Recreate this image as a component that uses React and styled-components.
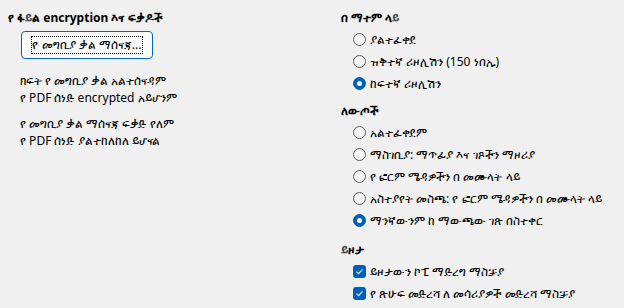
import React from "react";
import styled, { createGlobalStyle } from "styled-components";

const Global = createGlobalStyle`
  html, body { margin: 0; padding: 0; background: #f0f0f0; }
  body {
    font-family: "Noto Sans", "DejaVu Sans", "Liberation Sans", sans-serif;
    font-size: 12px;
    color: #000;
  }
`;

const Page = styled.div`
  width: 624px;
  height: 308px;
  box-sizing: border-box;
  padding: 9px 0 0 8px;
  display: flex;
  background: #f0f0f0;
`;

const LeftCol = styled.div`
  width: 333px;
  display: flex;
  flex-direction: column;
`;

const RightCol = styled.div`
  flex: 1;
  display: flex;
  flex-direction: column;
`;

const Title = styled.div`
  font-weight: bold;
  height: 17px;
  line-height: 17px;
  white-space: nowrap;
`;

const ButtonBox = styled.div`
  margin: 5px 0 0 13px;
  width: 132px;
  height: 28px;
  box-sizing: border-box;
  border: 1px solid #0067c0;
  border-radius: 4px;
  background: #fdfdfd;
  display: flex;
  align-items: center;
  justify-content: center;
`;

const FocusRect = styled.div`
  width: 112px;
  height: 18px;
  box-sizing: border-box;
  border: 1px dotted #000;
  display: flex;
  align-items: center;
  justify-content: center;
  white-space: nowrap;
  line-height: 16px;
`;

const InfoGroup = styled.div`
  margin: ${(p) => p.$top}px 0 0 12px;
  display: flex;
  flex-direction: column;
`;

const InfoLine = styled.div`
  height: 17px;
  line-height: 17px;
  white-space: nowrap;
`;

const Section = styled.div`
  display: flex;
  flex-direction: column;
  margin-top: ${(p) => p.$top || 0}px;
`;

const OptionList = styled.div`
  display: flex;
  flex-direction: column;
  margin: 2px 0 0 12px;
`;

const Option = styled.div`
  height: 22px;
  display: flex;
  align-items: center;
  gap: 4px;
  white-space: nowrap;
`;

const Radio = styled.span`
  width: 13px;
  height: 13px;
  box-sizing: border-box;
  border-radius: 50%;
  flex: none;
  display: flex;
  align-items: center;
  justify-content: center;
  border: 1px solid ${(p) => (p.$on ? "#005fb8" : "#5d5d5d")};
  background: ${(p) => (p.$on ? "#005fb8" : "#f3f3f3")};
  &::after {
    content: "";
    display: ${(p) => (p.$on ? "block" : "none")};
    width: 5px;
    height: 5px;
    border-radius: 50%;
    background: #fff;
  }
`;

const Check = styled.span`
  width: 13px;
  height: 13px;
  border-radius: 3px;
  background: #005fb8;
  flex: none;
  display: flex;
  align-items: center;
  justify-content: center;
`;

const Label = styled.span`
  line-height: 17px;
`;

function RadioOption({ on, children }) {
  return (
    <Option>
      <Radio $on={on} />
      <Label>{children}</Label>
    </Option>
  );
}

function CheckOption({ children }) {
  return (
    <Option>
      <Check>
        <svg width="9" height="9" viewBox="0 0 9 9">
          <path d="M1.5 4.7 L3.5 6.7 L7.6 2.4" fill="none" stroke="#fff" strokeWidth="1.1" />
        </svg>
      </Check>
      <Label>{children}</Label>
    </Option>
  );
}

export default function App() {
  return (
    <>
      <Global />
      <Page>
        <LeftCol>
          <Title>የ ፋይል encryption እና ፍቃዶች</Title>
          <ButtonBox>
            <FocusRect>የ መግቢያ ቃል ማሰናጃ...</FocusRect>
          </ButtonBox>
          <InfoGroup $top={13}>
            <InfoLine>ክፍት የ መግቢያ ቃል አልተሰናዳም</InfoLine>
            <InfoLine>የ PDF ሰነድ encrypted አይሆንም</InfoLine>
          </InfoGroup>
          <InfoGroup $top={9}>
            <InfoLine>የ መግቢያ ቃል ማሰናጃ ፍቃድ የለም</InfoLine>
            <InfoLine>የ PDF ሰነድ ያልተከለከለ ይሆናል</InfoLine>
          </InfoGroup>
        </LeftCol>
        <RightCol>
          <Section>
            <Title>በ ማተም ላይ</Title>
            <OptionList>
              <RadioOption>ያልተፈቀደ</RadioOption>
              <RadioOption>ዝቅተኛ ሪዞሊሽን (150 ነበኢ)</RadioOption>
              <RadioOption on>ከፍተኛ ሪዞሊሽን</RadioOption>
            </OptionList>
          </Section>
          <Section $top={8}>
            <Title>ለውጦች</Title>
            <OptionList>
              <RadioOption>አልተፈቀደም</RadioOption>
              <RadioOption>ማስገቢያ: ማጥፊያ እና ገጾችን ማዞሪያ</RadioOption>
              <RadioOption>የ ፎርም ሜዳዎችን በ መሙላት ላይ</RadioOption>
              <RadioOption>አስተያየት መስጫ: የ ፎርም ሜዳዎችን በ መሙላት ላይ</RadioOption>
              <RadioOption on>ማንኛውንም ከ ማውጫው ገጽ በስተቀር</RadioOption>
            </OptionList>
          </Section>
          <Section $top={10}>
            <Title>ይዞታ</Title>
            <OptionList>
              <CheckOption>ይዞታውን ኮፒ ማድረግ ማስቻያ</CheckOption>
              <CheckOption>የ ጽሁፍ መድረሻ ለ መሳሪያዎች መድረሻ ማስቻያ</CheckOption>
            </OptionList>
          </Section>
        </RightCol>
      </Page>
    </>
  );
}
